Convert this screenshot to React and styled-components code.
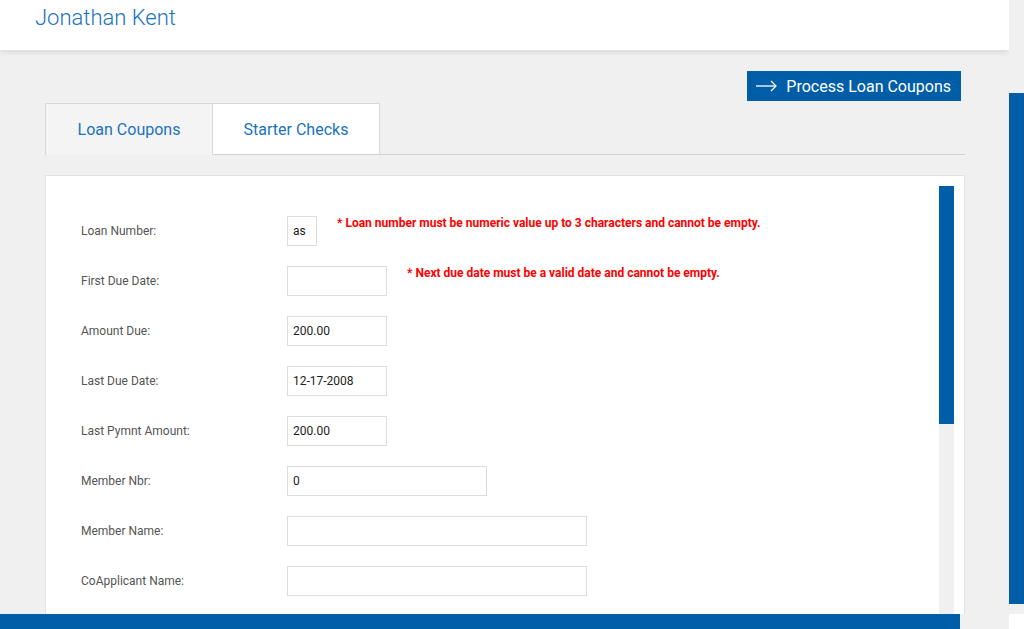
import React from "react";
import styled, { createGlobalStyle } from "styled-components";

const colors = {
  page: "#f0f0f0",
  blue: "#005ea8",
  link: "#1b72bf",
  border: "#dddddd",
  label: "#555555",
  error: "#ff0000",
};

const GlobalStyle = createGlobalStyle`
  html, body {
    margin: 0;
    height: 100%;
    overflow: hidden;
  }
  body {
    font-family: Roboto, "Liberation Sans", sans-serif;
    background: ${colors.page};
  }
  * { box-sizing: border-box; }
`;

// window frame: page + custom scrollbars
const Frame = styled.div`
  width: 100vw;
  height: 100vh;
  display: grid;
  grid-template-columns: 1fr 15px;
  grid-template-rows: 1fr 15px;
  background: ${colors.page};
`;

const Content = styled.div`
  overflow: hidden;
  min-width: 0;
  min-height: 0;
`;

const VTrack = styled.div`
  background: ${colors.page};
  min-height: 0;
  overflow: hidden;
`;

const VThumb = styled.div`
  width: 100%;
  margin-top: ${({ offset }) => offset}px;
  height: ${({ length }) => length}px;
  background: ${colors.blue};
`;

const HTrack = styled.div`
  background: ${colors.page};
`;

const HThumb = styled.div`
  height: 100%;
  width: ${({ length }) => length}px;
  background: ${colors.blue};
`;

const Corner = styled.div`
  background: #ffffff;
`;

const Header = styled.header`
  height: 50px;
  background: #ffffff;
  padding: 5px 0 0 35px;
  box-shadow: 0 2px 6px rgba(0, 0, 0, 0.1);
  position: relative;
  z-index: 1;
`;

const UserName = styled.h1`
  margin: 0;
  font-size: 22px;
  line-height: 26px;
  font-weight: 300;
  color: ${colors.link};
`;

const Main = styled.main`
  width: 965px;
  padding-left: 45px;
`;

const Actions = styled.div`
  display: flex;
  justify-content: flex-end;
  margin-top: 21px;
  padding-right: 4px;
`;

const PrimaryButton = styled.button`
  display: flex;
  align-items: center;
  gap: 9px;
  height: 30px;
  padding: 0 10px 0 9px;
  border: none;
  background: ${colors.blue};
  color: #ffffff;
  font-family: inherit;
  font-size: 16px;
  cursor: pointer;
`;

const TabList = styled.div`
  display: flex;
  align-items: flex-end;
  margin-top: 2px;
  height: 52px;
  border-bottom: 1px solid #d2d2d2;
`;

const Tab = styled.div`
  width: 168px;
  height: ${({ active }) => (active ? "52px" : "51px")};
  margin-bottom: ${({ active }) => (active ? "-1px" : "0")};
  margin-left: ${({ first }) => (first ? "0" : "-1px")};
  border: 1px solid #d8d8d8;
  border-bottom: none;
  background: ${({ active }) => (active ? "#f4f4f4" : "#ffffff")};
  color: ${colors.link};
  font-size: 16px;
  display: flex;
  align-items: center;
  justify-content: center;
  padding-bottom: ${({ active }) => (active ? "1px" : "0")};
`;

const Panel = styled.section`
  margin-top: 20px;
  background: #ffffff;
  border: 1px solid #e2e2e2;
  padding: 10px 10px 0;
`;

const ScrollArea = styled.div`
  height: 430px;
  display: grid;
  grid-template-columns: 1fr 15px;
`;

const Form = styled.form`
  overflow: hidden;
  padding: 30px 0 0 25px;
`;

const Row = styled.div`
  display: flex;
  align-items: flex-start;
  margin-bottom: 20px;
`;

const Label = styled.label`
  width: 206px;
  flex-shrink: 0;
  font-size: 12px;
  line-height: 30px;
  color: ${colors.label};
`;

const Field = styled.input`
  width: ${({ size }) => size}px;
  height: 30px;
  padding: 0 5px;
  border: 1px solid ${colors.border};
  font-family: inherit;
  font-size: 12px;
  color: #222222;
  background: #ffffff;
  outline: none;
`;

const ErrorText = styled.span`
  margin-left: 20px;
  font-size: 12px;
  line-height: 14px;
  font-weight: 700;
  color: ${colors.error};
`;

const ArrowIcon = () => (
  <svg width="21" height="12" viewBox="0 0 21 12" fill="none">
    <path d="M0 6H20" stroke="#fff" strokeWidth="1.3" />
    <path d="M15 1L20 6L15 11" stroke="#fff" strokeWidth="1.3" />
  </svg>
);

const fields = [
  {
    label: "Loan Number:",
    width: 30,
    value: "as",
    error: "* Loan number must be numeric value up to 3 characters and cannot be empty.",
  },
  {
    label: "First Due Date:",
    width: 100,
    value: "",
    error: "* Next due date must be a valid date and cannot be empty.",
  },
  { label: "Amount Due:", width: 100, value: "200.00" },
  { label: "Last Due Date:", width: 100, value: "12-17-2008" },
  { label: "Last Pymnt Amount:", width: 100, value: "200.00" },
  { label: "Member Nbr:", width: 200, value: "0" },
  { label: "Member Name:", width: 300, value: "" },
  { label: "CoApplicant Name:", width: 300, value: "" },
];

export default function App() {
  return (
    <>
      <GlobalStyle />
      <Frame>
        <Content>
          <Header>
            <UserName>Jonathan Kent</UserName>
          </Header>
          <Main>
            <Actions>
              <PrimaryButton type="button">
                <ArrowIcon />
                Process Loan Coupons
              </PrimaryButton>
            </Actions>
            <TabList>
              <Tab first active>
                Loan Coupons
              </Tab>
              <Tab>Starter Checks</Tab>
            </TabList>
            <Panel>
              <ScrollArea>
                <Form>
                  {fields.map((f) => (
                    <Row key={f.label}>
                      <Label>{f.label}</Label>
                      <Field size={f.width} defaultValue={f.value} readOnly />
                      {f.error ? <ErrorText>{f.error}</ErrorText> : null}
                    </Row>
                  ))}
                </Form>
                <VTrack>
                  <VThumb offset={0} length={238} />
                </VTrack>
              </ScrollArea>
            </Panel>
          </Main>
        </Content>
        <VTrack>
          <VThumb offset={93} length={511} />
        </VTrack>
        <HTrack>
          <HThumb length={960} />
        </HTrack>
        <Corner />
      </Frame>
    </>
  );
}
